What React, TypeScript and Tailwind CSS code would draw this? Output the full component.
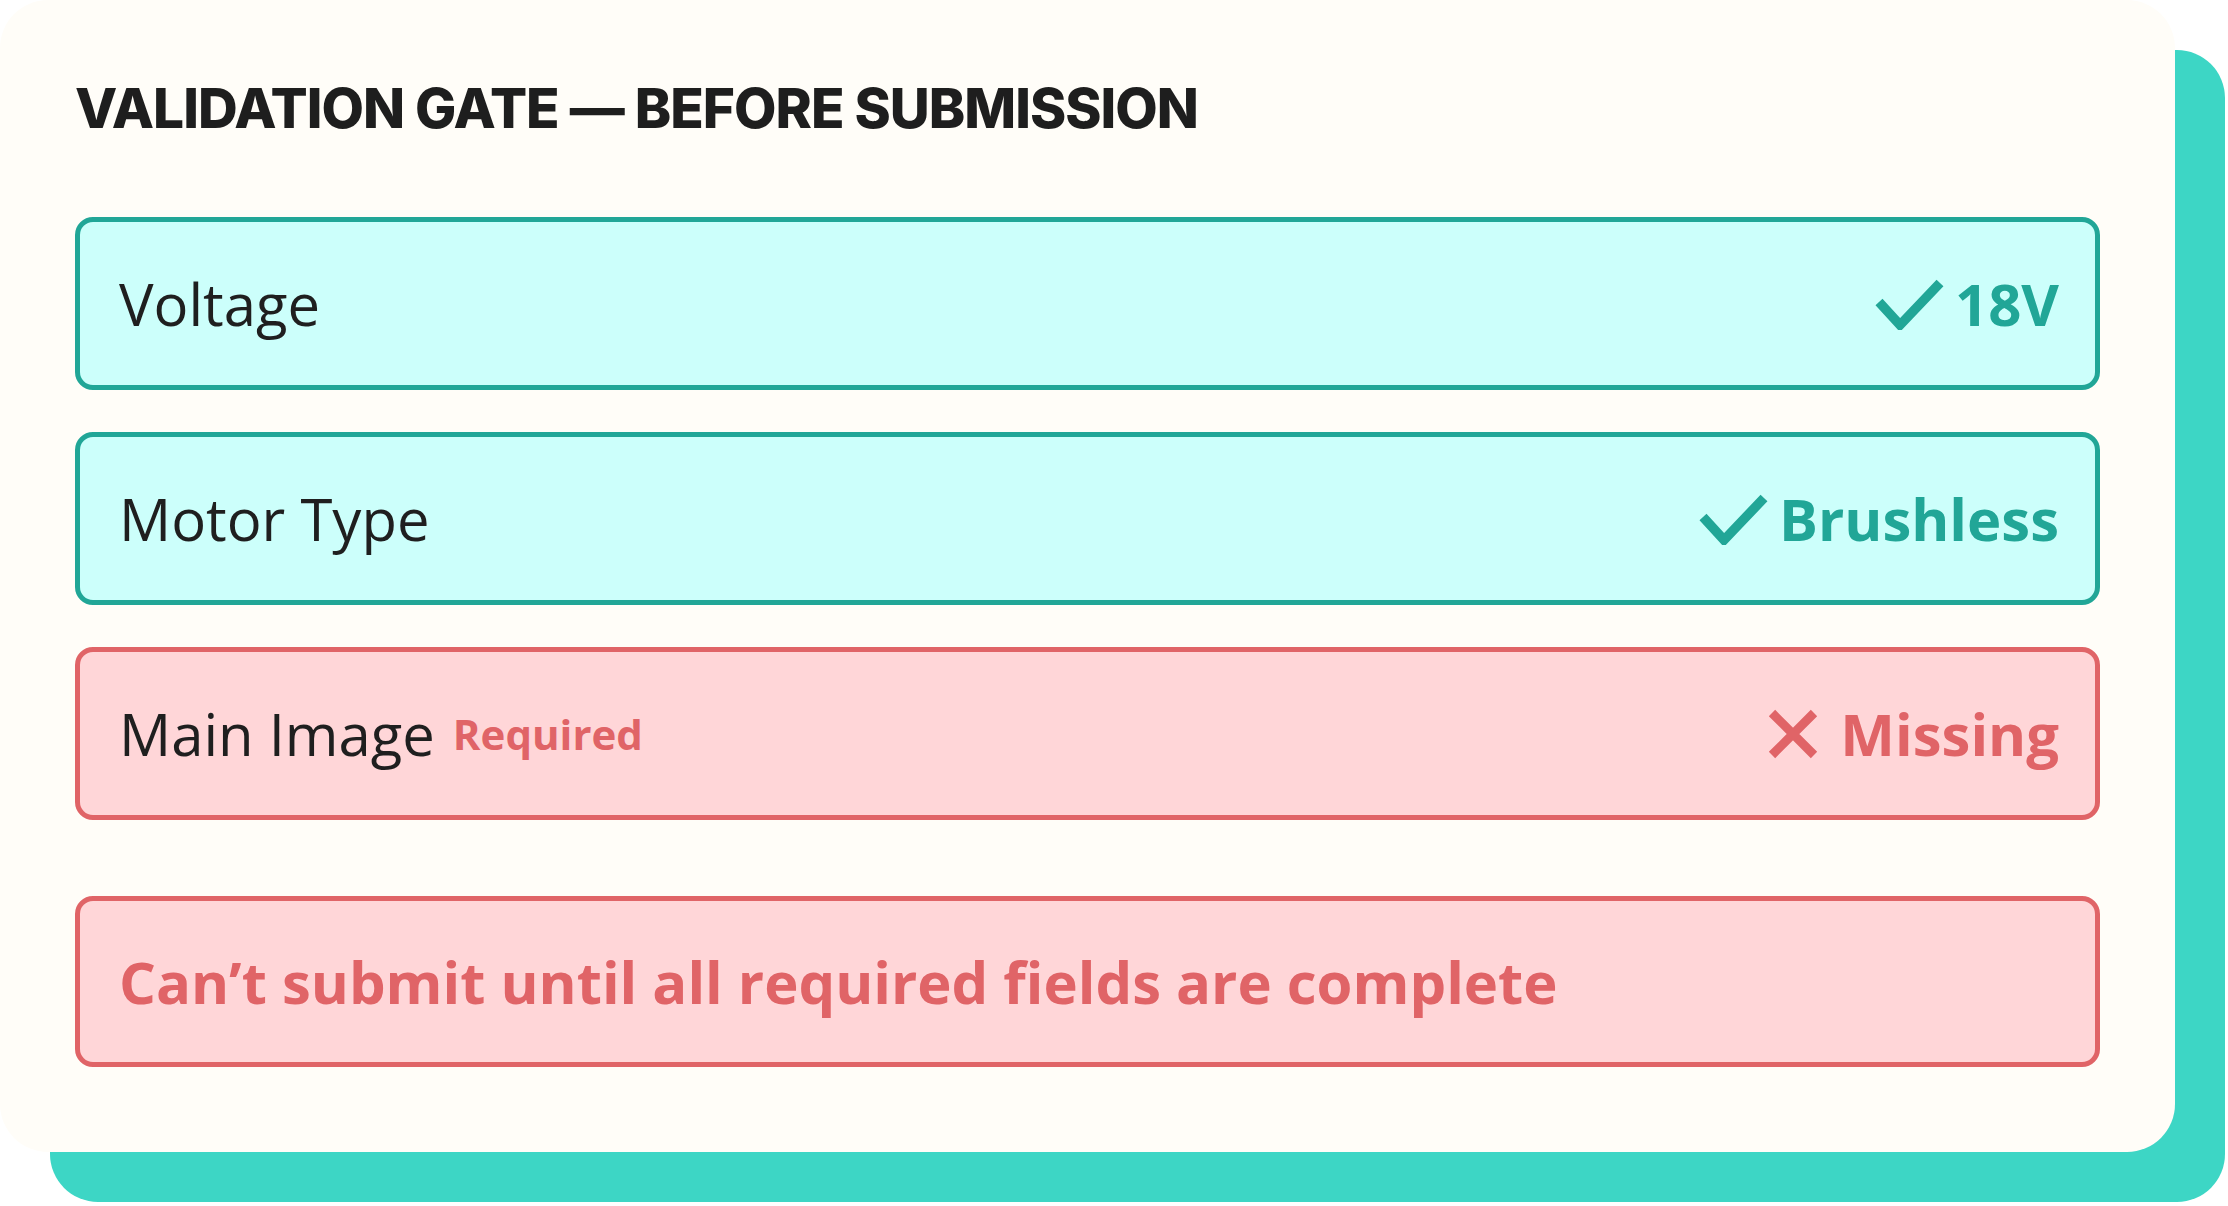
import { ReactNode } from "react";

function Check() {
  return (
    <svg width="70" height="52" viewBox="0 0 70 52" fill="none">
      <path d="M4 24 L25 47 L65 5" stroke="#21a697" strokeWidth="9.5" strokeLinejoin="miter" />
    </svg>
  );
}

function Cross() {
  return (
    <svg width="50" height="50" viewBox="0 0 50 50" fill="none">
      <path d="M4 4 L46 46 M46 4 L4 46" stroke="#e06467" strokeWidth="9" />
    </svg>
  );
}

type RowProps = {
  label: string;
  tag?: string;
  value: string;
  ok: boolean;
};

function Row({ label, tag, value, ok }: RowProps) {
  return (
    <div
      className={
        ok
          ? "h-[173px] flex items-center justify-between rounded-[18px] border-[5px] border-[#21a697] bg-[#ccfffb] pl-[39px] pr-[36px]"
          : "h-[173px] flex items-center justify-between rounded-[18px] border-[5px] border-[#e06467] bg-[#ffd6d8] pl-[39px] pr-[36px]"
      }
    >
      <div className="flex items-center gap-[18px]">
        <span className="text-[58px] text-[#1f1f1f]">{label}</span>
        {tag && <span className="text-[42px] font-bold text-[#e06467]">{tag}</span>}
      </div>
      <div className={ok ? "flex items-center gap-[10px]" : "flex items-center gap-[22px]"}>
        {ok ? <Check /> : <Cross />}
        <span className={ok ? "text-[58px] font-bold text-[#21a697]" : "text-[58px] font-bold text-[#e06467]"}>
          {value}
        </span>
      </div>
    </div>
  );
}

function Alert({ children }: { children: ReactNode }) {
  return (
    <div className="mt-[76px] h-[171px] flex items-center rounded-[18px] border-[5px] border-[#e06467] bg-[#ffd6d8] pl-[39px]">
      <span className="text-[58px] font-bold text-[#e06467]">{children}</span>
    </div>
  );
}

export default function App() {
  return (
    <div className="w-full min-h-screen bg-white font-['Open_Sans',sans-serif]">
      {/* Card with offset teal block behind it */}
      <div className="w-[2175px] h-[1152px] rounded-[48px] bg-[#fffdf8] shadow-[50px_50px_0_0_#3dd6c5] px-[75px] pt-[81px]">
        <h1 className="font-['Inter',sans-serif] text-[55px] font-extrabold leading-none tracking-[-1px] text-[#1e1e1e]">
          VALIDATION GATE — BEFORE SUBMISSION
        </h1>

        <div className="mt-[81px] flex flex-col gap-[42px]">
          <Row label="Voltage" value="18V" ok />
          <Row label="Motor Type" value="Brushless" ok />
          <Row label="Main Image" tag="Required" value="Missing" ok={false} />
        </div>

        <Alert>Can’t submit until all required fields are complete</Alert>
      </div>
    </div>
  );
}
